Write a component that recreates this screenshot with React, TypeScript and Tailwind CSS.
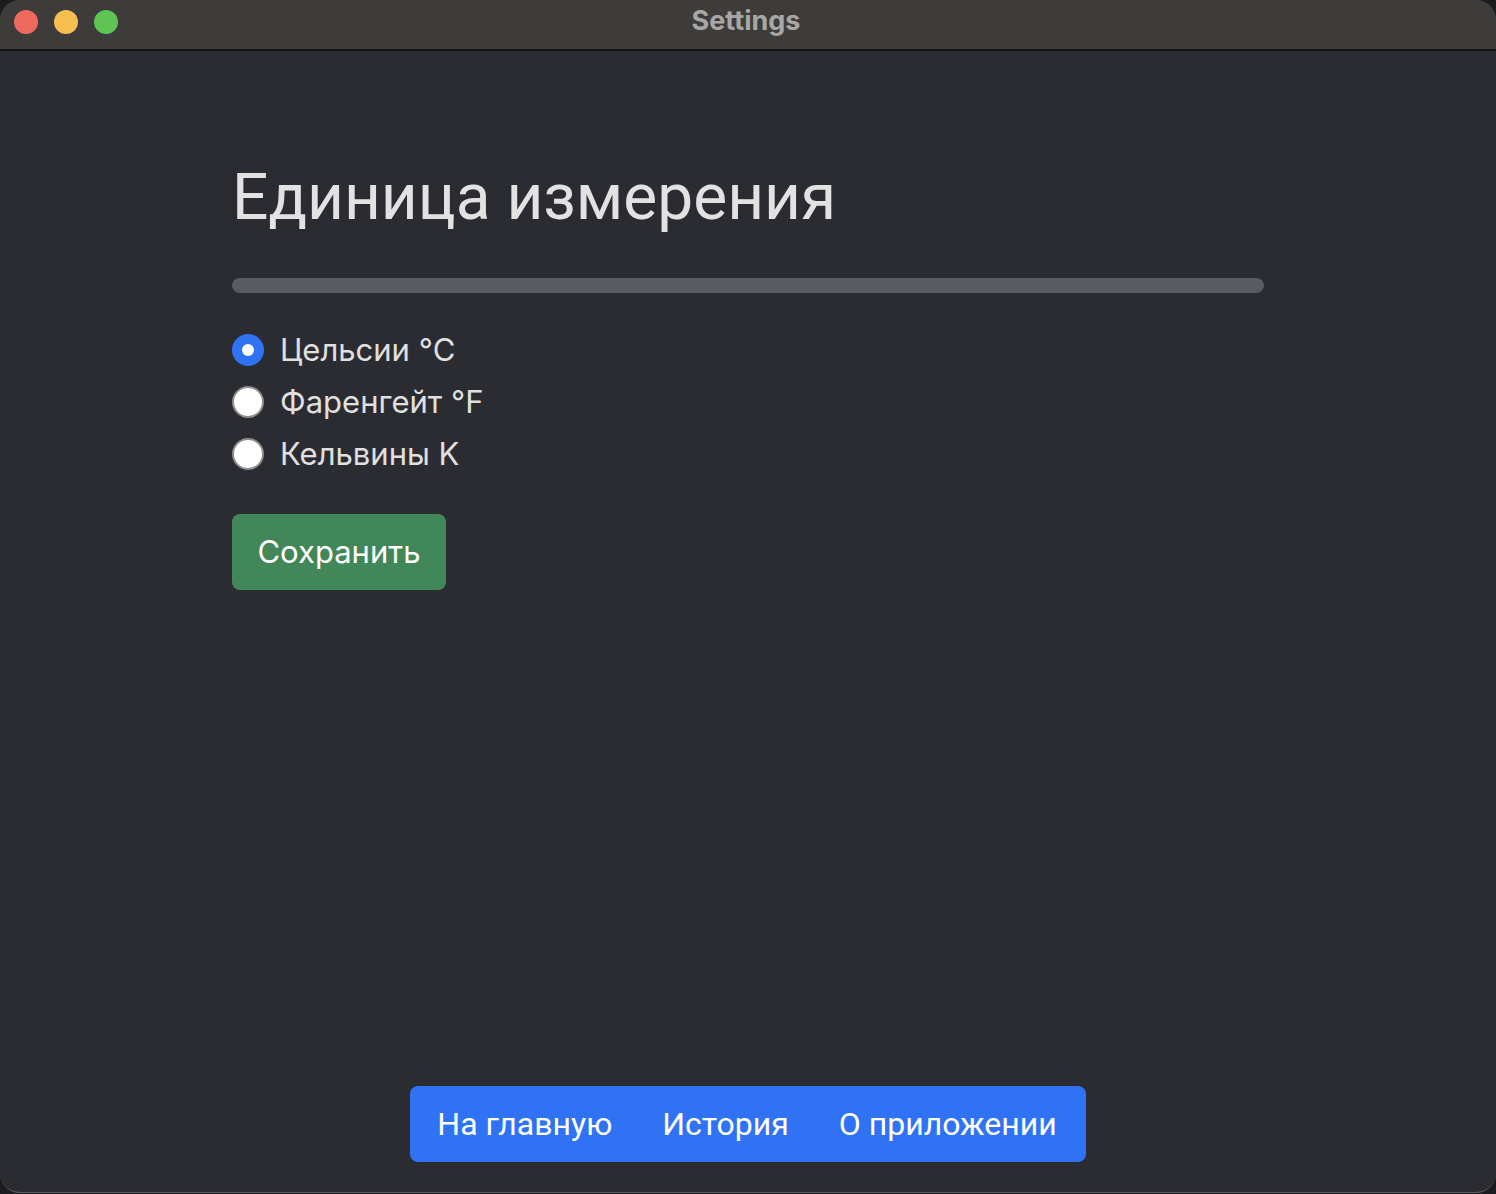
import React from "react";

export default function App() {
  const options = [
    { label: "Цельсии °C", checked: true },
    { label: "Фаренгейт °F", checked: false },
    { label: "Кельвины K", checked: false },
  ];
  return (
    <div className="w-[1496px] h-[1194px] bg-[#1c1b1d] overflow-hidden">
      <div className="w-full h-[1193px] rounded-[20px] overflow-hidden flex flex-col bg-[#2b2c31] border-b border-[#5c5c60]">
        <div className="h-[51px] shrink-0 bg-[#3d3c3a] border-b-2 border-[#141414] relative flex items-center justify-center">
          <div className="absolute left-[14px] top-[10px] flex gap-[16px]">
            <div className="w-[24px] h-[24px] rounded-full bg-[#ee6a5f]" />
            <div className="w-[24px] h-[24px] rounded-full bg-[#f5be4f]" />
            <div className="w-[24px] h-[24px] rounded-full bg-[#5ec454]" />
          </div>
          <div className="text-[27px] font-bold text-[#a8a7a5] font-['Inter',sans-serif] -mt-[7px] -ml-[4px]">Settings</div>
        </div>
        <div className="flex-1 flex flex-col items-center">
          <div className="w-[1032px] pt-[107px]">
            <h1 className="text-[64px] leading-[80px] text-[#e2e2e2] font-['Roboto',sans-serif] font-normal">
              Единица измерения
            </h1>
            <div className="mt-[40px] h-[15px] rounded-full bg-[#5a5b60]" />
            <div className="mt-[33px] flex flex-col gap-[4px]">
              {options.map((o) => (
                <label key={o.label} className="flex items-center h-[48px] gap-[16px]">
                  {o.checked ? (
                    <span className="w-[32px] h-[32px] rounded-full bg-[#2f72f3] flex items-center justify-center">
                      <span className="w-[12px] h-[12px] rounded-full bg-white" />
                    </span>
                  ) : (
                    <span className="w-[32px] h-[32px] rounded-full bg-white border-2 border-[#8d8d8d]" />
                  )}
                  <span className="text-[31px] text-[#e0e0e0] font-['Inter',sans-serif]">{o.label}</span>
                </label>
              ))}
            </div>
            <button className="mt-[36px] w-[214px] h-[76px] rounded-[8px] bg-[#428757] text-white text-[31px] font-['Inter',sans-serif]">
              Сохранить
            </button>
          </div>
          <div className="mt-auto mb-[30px] h-[76px] rounded-[8px] bg-[#2f72f3] flex items-center pl-[2px] pr-[4px]">
            {["На главную", "История", "О приложении"].map((t) => (
              <span key={t} className="px-[25px] text-[32px] text-white font-['Roboto',sans-serif]">
                {t}
              </span>
            ))}
          </div>
        </div>
      </div>
    </div>
  );
}
